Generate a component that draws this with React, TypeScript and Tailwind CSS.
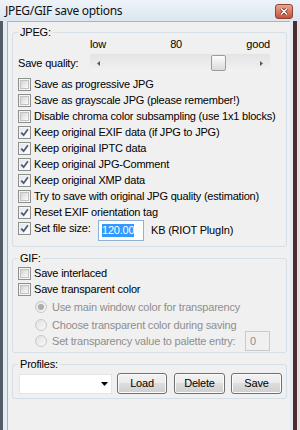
import type { FC, ReactNode } from 'react';

const jpegOptions = [
  { label: 'Save as progressive JPG', checked: false },
  { label: 'Save as grayscale JPG (please remember!)', checked: false },
  { label: 'Disable chroma color subsampling (use 1x1 blocks)', checked: false },
  { label: 'Keep original EXIF data (if JPG to JPG)', checked: true },
  { label: 'Keep original IPTC data', checked: true },
  { label: 'Keep original JPG-Comment', checked: true },
  { label: 'Keep original XMP data', checked: true },
  { label: 'Try to save with original JPG quality (estimation)', checked: false },
  { label: 'Reset EXIF orientation tag', checked: true },
];

const CheckBox: FC<{ checked?: boolean }> = ({ checked }) => (
  <span className="flex h-[13px] w-[13px] shrink-0 border border-[#8e8f8f] bg-[#f4f4f4] p-[1px]">
    {checked ? (
      <span className="flex h-full w-full bg-linear-to-br from-[#e6e6e6] to-white">
        <svg width="9" height="9" viewBox="0 0 9 9">
          <path
            d="M1.2 4.6 L3.6 7.2 L7.9 1.3"
            fill="none"
            stroke="#4a5d82"
            strokeWidth="1.8"
          />
        </svg>
      </span>
    ) : (
      <span className="block h-full w-full border border-[#c2c2c2] bg-linear-to-br from-[#d4d4d4] to-[#fafafa]" />
    )}
  </span>
);

const CheckRow: FC<{ label: string; checked?: boolean }> = ({
  label,
  checked,
}) => (
  <label className="flex h-[16px] items-center gap-[3px] pl-[5px] whitespace-nowrap">
    <CheckBox checked={checked} />
    <span>{label}</span>
  </label>
);

const Radio: FC<{ selected?: boolean }> = ({ selected }) => (
  <span className="flex h-[12px] w-[12px] shrink-0 items-center justify-center rounded-full border border-[#c8c8c8] bg-linear-to-br from-[#e2e2e2] to-[#f8f8f8]">
    {selected && <span className="h-[6px] w-[6px] rounded-full bg-[#acacac]" />}
  </span>
);

const GroupBox: FC<{ title: string; className?: string; children: ReactNode }> = ({
  title,
  className,
  children,
}) => (
  <fieldset
    className={`mr-[3px] ml-[4px] rounded-[3px] border border-[#d5dfe5] ${className ?? ''}`}
  >
    <legend className="ml-[5px] px-[2px] leading-[13px]">{title}</legend>
    {children}
  </fieldset>
);

const WinButton: FC<{ title: string; className?: string }> = ({ title, className }) => (
  <button
    className={`flex h-[21px] items-center justify-center rounded-[3px] border border-[#707070] bg-[linear-gradient(#f2f2f2,#ebebeb_50%,#dddddd_50%,#cfcfcf)] shadow-[inset_0_0_0_1px_#fbfbfb] ${className ?? ''}`}
  >
    {title}
  </button>
);

const App: FC = () => {
  return (
    <div className="flex h-[430px] w-[300px] flex-col overflow-hidden bg-[#e3ebf3] font-['Liberation_Sans',Arial,sans-serif] text-[11px] leading-[13px] tracking-[-0.2px] text-black">
      {/* title bar */}
      <div className="flex h-[21px] shrink-0 items-center justify-between bg-linear-to-b from-[#eef3f9] to-[#dce6f0] pr-[7px] pl-[5px]">
        <span className="font-['Noto_Sans',sans-serif] text-[12px] leading-[16px] tracking-[-0.3px] text-[#111]">
          JPEG/GIF save options
        </span>
        <span className="mt-[2px] flex h-[15px] w-[18px] items-center justify-center rounded-[3px] border border-[#8f4434] bg-linear-to-b from-[#eaa593] to-[#c6503a]">
          <svg width="8" height="7" viewBox="0 0 8 7">
            <path d="M1 0.5 L7 6.5 M7 0.5 L1 6.5" stroke="#6a2a1e" strokeWidth="3" />
            <path d="M1 0.5 L7 6.5 M7 0.5 L1 6.5" stroke="#ffffff" strokeWidth="1.5" />
          </svg>
        </span>
      </div>

      <div className="flex flex-1">
        <div className="w-[3px] bg-[#515b66]" />
        <div className="w-[4px]" />

        {/* client area */}
        <div className="flex w-[283px] flex-col border-t border-l border-[#aab4be] bg-[#f0f0f0]">
          <GroupBox title="JPEG:" className="mt-[4px] pb-[5px]">
            <div className="-mt-[1px] ml-[77px] flex w-[180px] justify-between">
              <span>low</span>
              <span>80</span>
              <span>good</span>
            </div>
            <div className="mt-[3px] flex h-[18px] items-center pl-[5px]">
              <span className="w-[72px]">Save quality:</span>
              <div className="flex h-[18px] w-[180px] items-center bg-linear-to-b from-[#e4e4e4] to-[#f2f2f2]">
                <span className="flex w-[17px] justify-center">
                  <svg width="3" height="5" viewBox="0 0 3 5">
                    <path d="M3 0 L0 2.5 L3 5Z" fill="#5a5a5a" />
                  </svg>
                </span>
                <span className="flex-1">
                  <span className="ml-[104px] block h-[16px] w-[15px] rounded-[2px] border border-[#9c9c9c] bg-linear-to-b from-[#fdfdfd] to-[#dadada]" />
                </span>
                <span className="flex w-[17px] justify-center">
                  <svg width="3" height="5" viewBox="0 0 3 5">
                    <path d="M0 0 L3 2.5 L0 5Z" fill="#5a5a5a" />
                  </svg>
                </span>
              </div>
            </div>

            <div className="mt-[4px] flex flex-col">
              {jpegOptions.map((opt) => (
                <CheckRow key={opt.label} label={opt.label} checked={opt.checked} />
              ))}
            </div>

            <div className="flex h-[21px] items-start pl-[5px]">
              <label className="flex h-[16px] w-[80px] items-center gap-[3px]">
                <CheckBox checked />
                <span>Set file size:</span>
              </label>
              <span className="flex h-[21px] w-[46px] items-center border border-[#8fb1d6] bg-white pl-[3px]">
                <span className="bg-[#3399ff] text-white">120.00</span>
              </span>
              <span className="ml-[7px] self-center">KB (RIOT PlugIn)</span>
            </div>
          </GroupBox>

          <GroupBox title="GIF:" className="mt-[5px] pb-[1px]">
            <CheckRow label="Save interlaced" />
            <CheckRow label="Save transparent color" />
            <div className="mt-[2px] flex flex-col pl-[22px] text-[#8e8e8e]">
              <div className="flex h-[16px] items-center gap-[5px]">
                <Radio selected />
                <span>Use main window color for transparency</span>
              </div>
              <div className="mt-[2px] flex h-[16px] items-center gap-[5px]">
                <Radio />
                <span>Choose transparent color during saving</span>
              </div>
              <div className="-mt-[2px] flex h-[20px] items-center gap-[5px]">
                <Radio />
                <span className="w-[188px] whitespace-nowrap">
                  Set transparency value to palette entry:
                </span>
                <span className="flex h-[20px] w-[25px] items-center border border-[#c9c9c9] pl-[4px] text-[#8e8e8e]">
                  0
                </span>
              </div>
            </div>
          </GroupBox>

          <GroupBox title="Profiles:" className="mt-[5px] pb-[4px]">
            <div className="mt-[2px] flex h-[21px] items-center pl-[6px]">
              <span className="flex h-[20px] w-[93px] items-center justify-end border border-[#e3e4ea] bg-white pr-[3px]">
                <svg width="7" height="4" viewBox="0 0 7 4">
                  <path d="M0 0 H7 L3.5 4Z" fill="#000" />
                </svg>
              </span>
              <WinButton title="Load" className="ml-[5px] w-[50px]" />
              <WinButton title="Delete" className="ml-[7px] w-[51px]" />
              <WinButton title="Save" className="ml-[6px] w-[51px]" />
            </div>
          </GroupBox>
        </div>

        <div className="w-[3px]" />
        <div className="w-[4px] bg-[#4c2e30]" />
        <div className="w-[3px] bg-[#e6dfdf]" />
      </div>
    </div>
  );
};

export default App;
